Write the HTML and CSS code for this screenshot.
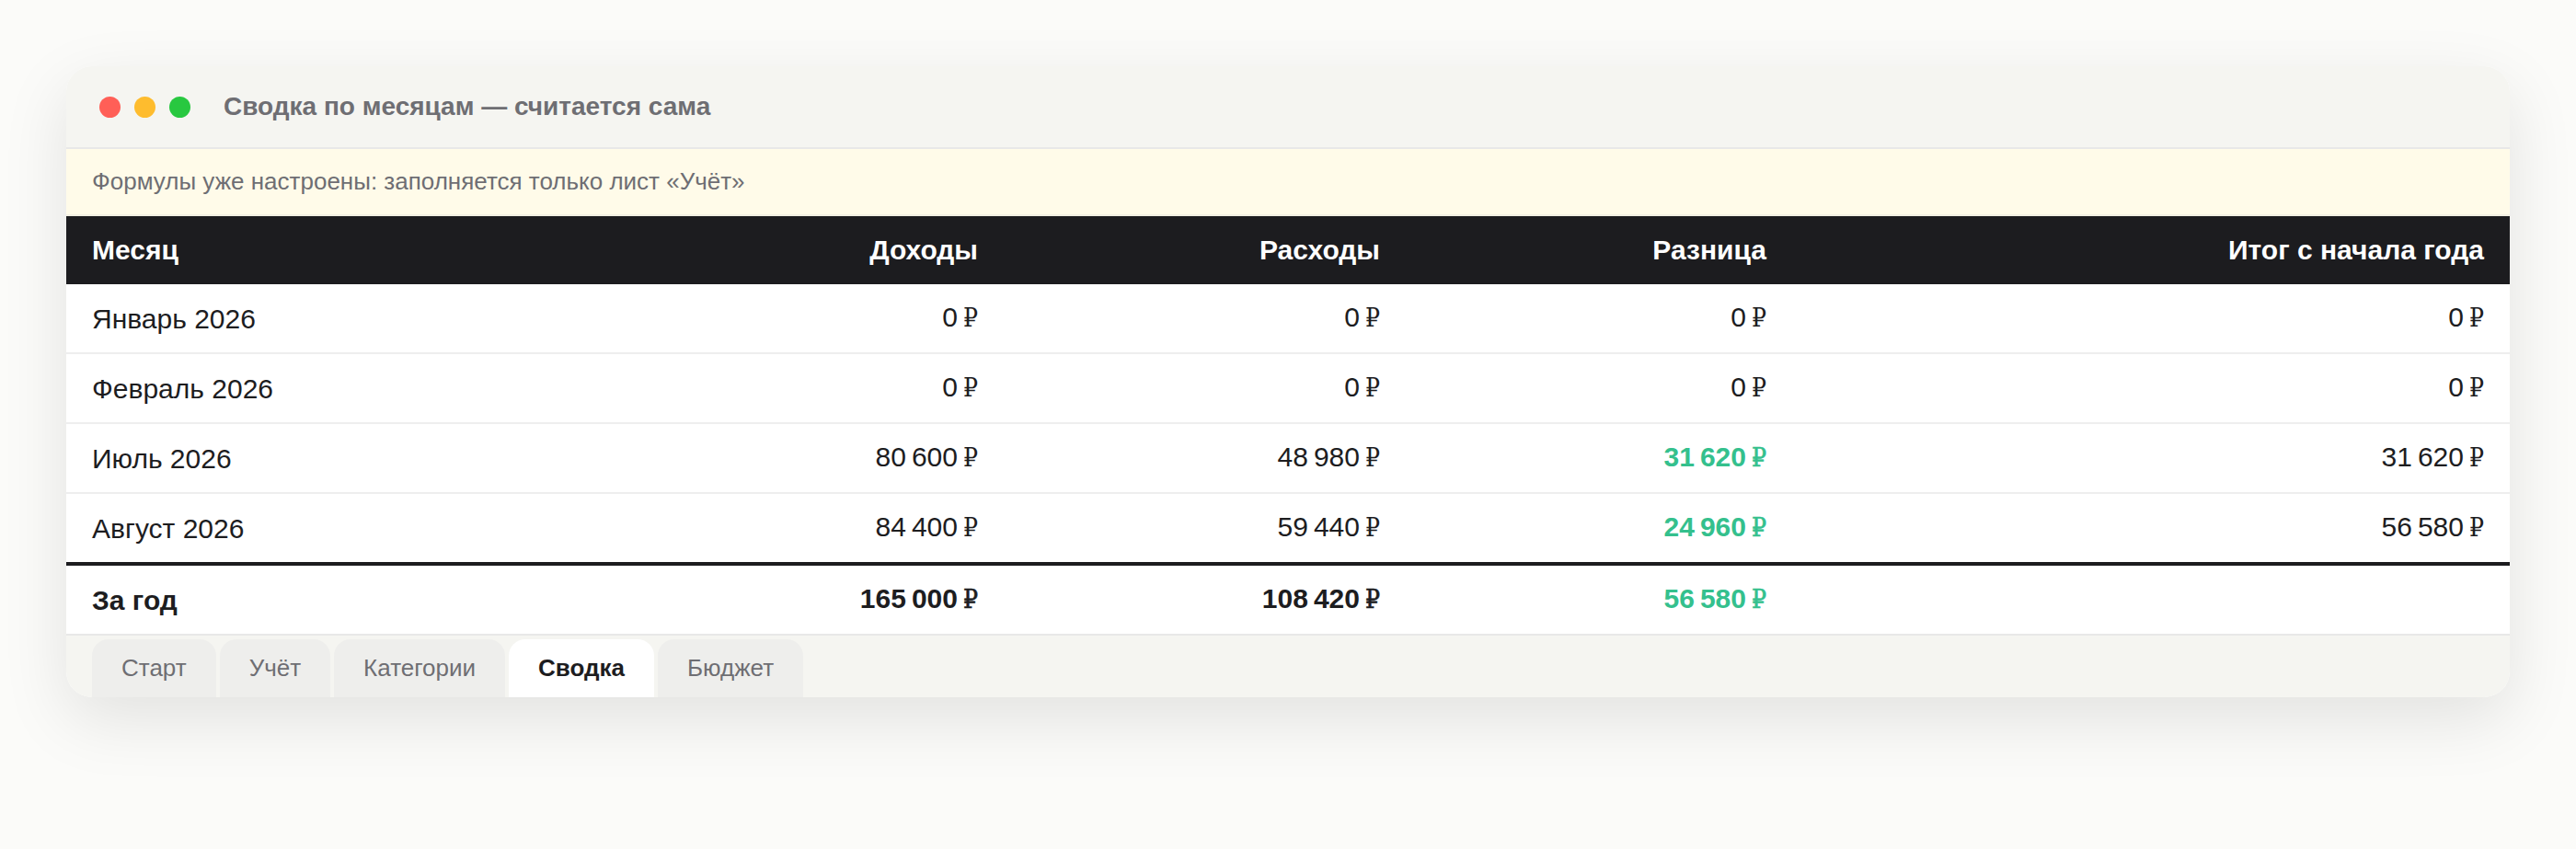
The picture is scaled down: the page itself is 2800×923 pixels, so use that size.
FILE: index.html
```html
<!DOCTYPE html>
<html lang="ru">
<head>
    <meta charset="UTF-8">
    <title>Сводка по месяцам</title>
    <link rel="stylesheet" href="styles.css">
</head>
<body>
    <section class="window">
        <header class="titlebar">
            <div class="dots">
                <span class="dot dot-red"></span>
                <span class="dot dot-yellow"></span>
                <span class="dot dot-green"></span>
            </div>
            <p class="title">Сводка по месяцам — считается сама</p>
        </header>
        <p class="note">Формулы уже настроены: заполняется только лист «Учёт»</p>
        <table class="sheet">
            <thead>
                <tr>
                    <th class="col-month">Месяц</th>
                    <th class="col-income">Доходы</th>
                    <th class="col-spend">Расходы</th>
                    <th class="col-diff">Разница</th>
                    <th class="col-total">Итог с начала года</th>
                </tr>
            </thead>
            <tbody>
                <tr>
                    <td>Январь 2026</td>
                    <td>0&#8239;<span class="rub">₽</span></td>
                    <td>0&#8239;<span class="rub">₽</span></td>
                    <td>0&#8239;<span class="rub">₽</span></td>
                    <td>0&#8239;<span class="rub">₽</span></td>
                </tr>
                <tr>
                    <td>Февраль 2026</td>
                    <td>0&#8239;<span class="rub">₽</span></td>
                    <td>0&#8239;<span class="rub">₽</span></td>
                    <td>0&#8239;<span class="rub">₽</span></td>
                    <td>0&#8239;<span class="rub">₽</span></td>
                </tr>
                <tr>
                    <td>Июль 2026</td>
                    <td>80&#8239;600&#8239;<span class="rub">₽</span></td>
                    <td>48&#8239;980&#8239;<span class="rub">₽</span></td>
                    <td class="plus">31&#8239;620&#8239;<span class="rub">₽</span></td>
                    <td>31&#8239;620&#8239;<span class="rub">₽</span></td>
                </tr>
                <tr>
                    <td>Август 2026</td>
                    <td>84&#8239;400&#8239;<span class="rub">₽</span></td>
                    <td>59&#8239;440&#8239;<span class="rub">₽</span></td>
                    <td class="plus">24&#8239;960&#8239;<span class="rub">₽</span></td>
                    <td>56&#8239;580&#8239;<span class="rub">₽</span></td>
                </tr>
            </tbody>
            <tfoot>
                <tr>
                    <td>За год</td>
                    <td>165&#8239;000&#8239;<span class="rub">₽</span></td>
                    <td>108&#8239;420&#8239;<span class="rub">₽</span></td>
                    <td class="plus">56&#8239;580&#8239;<span class="rub">₽</span></td>
                    <td></td>
                </tr>
            </tfoot>
        </table>
        <nav class="tabs">
            <a href="#" class="tab">Старт</a>
            <a href="#" class="tab">Учёт</a>
            <a href="#" class="tab">Категории</a>
            <a href="#" class="tab tab-active">Сводка</a>
            <a href="#" class="tab">Бюджет</a>
        </nav>
    </section>
</body>
</html>
```

FILE: styles.css
```css
body {
    margin: 0;
    padding: 72px;
    height: 923px;
    box-sizing: border-box;
    overflow: hidden;
    background-color: #fbfbf9;
    font-family: 'Liberation Sans', 'DejaVu Serif Condensed', serif;
    color: #1d1d1f;
}
.window {
    height: 686px;
    background-color: white;
    border-radius: 28px;
    overflow: hidden;
    box-shadow: 0 24px 72px rgba(0, 0, 0, 0.1);
}
.titlebar {
    display: flex;
    align-items: center;
    height: 88px;
    padding: 0 36px;
    background-color: #f5f5f1;
    border-bottom: 2px solid #e8e8e8;
}
.dots {
    display: flex;
    gap: 15px;
    margin-right: 36px;
}
.dot {
    width: 23px;
    height: 23px;
    border-radius: 50%;
}
.dot-red {
    background-color: #ff5f57;
}
.dot-yellow {
    background-color: #febc2e;
}
.dot-green {
    background-color: #28c840;
}
.title {
    margin: 0;
    font-size: 28px;
    font-weight: 700;
    color: #6e6e73;
}
.note {
    margin: 0;
    height: 71px;
    line-height: 71px;
    padding: 0 28px;
    background-color: #fffbe9;
    border-bottom: 2px solid #f2efe2;
    font-size: 26px;
    color: #6e6e73;
}
.sheet {
    width: 100%;
    table-layout: fixed;
    border-collapse: separate;
    border-spacing: 0;
    font-size: 30px;
}
.sheet th,
.sheet td {
    box-sizing: border-box;
    padding: 0 28px;
    text-align: right;
}
.sheet th:first-child,
.sheet td:first-child {
    text-align: left;
}
.sheet th {
    height: 74px;
    background-color: #1c1c1f;
    color: white;
    font-weight: 700;
}
.sheet td {
    height: 76px;
    padding-bottom: 2px;
    border-bottom: 2px solid #eeeeee;
}
.sheet td:first-child {
    padding-top: 2px;
    padding-bottom: 0;
}
.sheet tbody tr:last-child td {
    height: 74px;
    border-bottom: none;
}
.sheet tfoot td {
    height: 80px;
    border-top: 4px solid #1c1c1f;
    border-bottom: 2px solid #e8e8e8;
    font-weight: 700;
}
.col-month {
    width: 580px;
}
.col-income {
    width: 439px;
}
.col-spend {
    width: 437px;
}
.col-diff {
    width: 420px;
}
.plus {
    color: #34c08d;
    font-weight: 700;
}
.rub {
    font-size: 28px;
    font-weight: 400;
}
/* bold rows: the ruble sign stays narrow but needs a heavier stroke */
.plus .rub,
.sheet tfoot .rub {
    -webkit-text-stroke: 0.6px currentColor;
}
.tabs {
    display: flex;
    gap: 4px;
    height: 67px;
    box-sizing: border-box;
    padding: 4px 28px 0;
    background-color: #f5f5f1;
}
.tab {
    display: flex;
    align-items: center;
    padding: 0 32px;
    background-color: #eeeeec;
    border-radius: 18px 18px 0 0;
    color: #6e6e73;
    font-size: 26px;
    text-decoration: none;
}
.tab-active {
    background-color: white;
    color: #1d1d1f;
    font-weight: 700;
}
```
